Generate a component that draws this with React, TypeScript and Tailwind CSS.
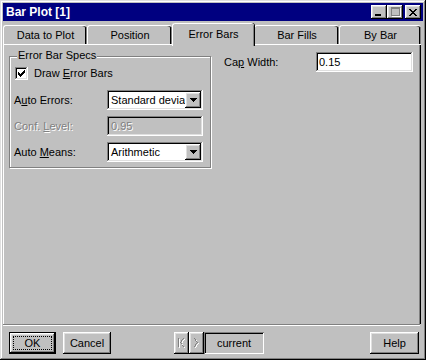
import React from "react";

const raised =
  "shadow-[inset_-1px_-1px_#000,inset_1px_1px_#fff,inset_-2px_-2px_#808080,inset_2px_2px_#dfdfdf]";
const sunken =
  "shadow-[inset_-1px_-1px_#fff,inset_1px_1px_#808080,inset_-2px_-2px_#dfdfdf,inset_2px_2px_#000]";

function Arrow() {
  return (
    <svg width="7" height="4" viewBox="0 0 7 4" shapeRendering="crispEdges">
      <path d="M0 0h7v1h-1v1h-1v1h-1v1h-1v-1h-1v-1h-1v-1h-1z" fill="#000" />
    </svg>
  );
}

function Combo({ text }: { text: string }) {
  return (
    <div className={`w-[96px] h-[20px] bg-white ${sunken} flex items-center p-[2px]`}>
      <span className="flex-1 pl-[2px] text-black leading-[16px] whitespace-nowrap">{text}</span>
      <div className={`w-[16px] h-[16px] bg-[#c0c0c0] ${raised} flex items-center justify-center`}>
        <Arrow />
      </div>
    </div>
  );
}

function Tab({ label, w, active }: { label: string; w: string; active?: boolean }) {
  if (active) {
    return (
      <div
        className={`${w} h-[23px] relative z-10 bg-[#c0c0c0] rounded-t-[3px] border-l border-t border-white shadow-[inset_-1px_0_#808080,1px_0_#000] flex items-center justify-center pb-[2px]`}
      >
        {label}
      </div>
    );
  }
  return (
    <div className={`${w} h-[19px] mt-[2px] flex items-center justify-center rounded-t-[3px] border-l border-t border-white shadow-[inset_-1px_0_#808080,inset_-2px_0_#000] bg-[#c0c0c0]`}>
      {label}
    </div>
  );
}

function TitleBtn({ children }: { children: React.ReactNode }) {
  return (
    <div className={`w-[16px] h-[14px] bg-[#c0c0c0] ${raised} flex items-center justify-center`}>
      {children}
    </div>
  );
}

function Btn({ children, w, def }: { children: React.ReactNode; w: string; def?: boolean }) {
  if (def) {
    return (
      <div className={`${w} h-[22px] border border-black`}>
        <div className={`w-full h-full bg-[#c0c0c0] ${raised} flex items-center justify-center p-[3px]`}>
          <div className="w-full h-full border border-dotted border-black flex items-center justify-center">
            {children}
          </div>
        </div>
      </div>
    );
  }
  return (
    <div className={`${w} h-[22px] bg-[#c0c0c0] ${raised} flex items-center justify-center`}>{children}</div>
  );
}

export default function App() {
  return (
    <div className="w-[426px] h-[360px] bg-[#c0c0c0] font-['Liberation_Sans',Arial,sans-serif] text-[11px] text-black shadow-[inset_-1px_-1px_#000,inset_1px_1px_#dfdfdf,inset_-2px_-2px_#808080,inset_2px_2px_#fff] p-[3px] flex flex-col select-none">
      {/* title bar */}
      <div className="h-[18px] bg-[#000080] flex items-center pl-[3px] pr-[2px]">
        <span className="text-white font-bold text-[12px] flex-1">Bar Plot [1]</span>
        <TitleBtn>
          <div className="w-[6px] h-[2px] bg-black mt-[6px] -ml-[2px]" />
        </TitleBtn>
        <TitleBtn>
          <div className="w-[9px] h-[9px] border border-[#808080] border-t-2 shadow-[1px_1px_#fff] -mt-[1px]" />
        </TitleBtn>
        <div className="w-[2px]" />
        <TitleBtn>
          <svg width="8" height="7" viewBox="0 0 8 7" shapeRendering="crispEdges">
            <path
              d="M0 0h2v1h1v1h2v-1h1v-1h2v1h-1v1h-1v1h-1v1h1v1h1v1h1v1h-2v-1h-1v-1h-2v1h-1v1h-2v-1h1v-1h1v-1h1v-1h-1v-1h-1v-1h-1z"
              fill="#000"
            />
          </svg>
        </TitleBtn>
      </div>

      {/* tabs */}
      <div className="flex mt-[2px] h-[21px] mr-[2px]">
        <Tab label="Data to Plot" w="w-[84px]" />
        <Tab label="Position" w="w-[85px]" />
        <Tab label="Error Bars" w="w-[82px]" active />
        <Tab label="Bar Fills" w="w-[85px]" />
        <Tab label="By Bar" w="w-[82px]" />
      </div>

      {/* panel */}
      <div className="flex-1 mr-[2px] shadow-[inset_1px_1px_#fff,inset_-1px_0_#000,inset_-2px_0_#808080] flex items-start pl-[6px] pt-[8px]">
        {/* group box */}
        <div className="relative mt-[4px] w-[202px] h-[112px] border border-[#808080] shadow-[inset_1px_1px_#fff,1px_1px_#fff] flex flex-col pl-[4px] pt-[10px]">
          <span className="absolute left-[7px] top-[-8px] px-[1px] bg-[#c0c0c0] leading-[13px]">Error Bar Specs</span>
          <div className="flex items-center h-[13px] pl-[1px]">
            <div className={`w-[13px] h-[13px] bg-white ${sunken} flex items-center justify-center`}>
              <svg width="7" height="7" viewBox="0 0 7 7" shapeRendering="crispEdges">
                <path d="M6 0h1v3h-1v1h-1v1h-1v1h-1v1h-1v-1h-1v-1h-1v-1h-1v-3h1v1h1v1h1v1h1v-1h1v-1h1z" fill="#000" />
              </svg>
            </div>
            <span className="ml-[6px]">
              Draw <u>E</u>rror Bars
            </span>
          </div>
          <div className="flex flex-col gap-[6px] mt-[10px]">
            <div className="flex items-center h-[20px]">
              <span className="w-[93px]">
                A<u>u</u>to Errors:
              </span>
              <Combo text="Standard devia" />
            </div>
            <div className="flex items-center h-[20px]">
              <span className="w-[93px] text-[#808080] [text-shadow:1px_1px_#fff]">
                Conf. <u>L</u>evel:
              </span>
              <div className={`w-[96px] h-[20px] bg-[#c0c0c0] ${sunken} flex items-center pl-[4px] text-[#808080] [text-shadow:1px_1px_#fff]`}>
                0.95
              </div>
            </div>
            <div className="flex items-center h-[20px]">
              <span className="w-[93px]">
                Auto <u>M</u>eans:
              </span>
              <Combo text="Arithmetic" />
            </div>
          </div>
        </div>

        {/* cap width */}
        <div className="flex items-center h-[20px] ml-[13px]">
          <span className="w-[92px]">
            Ca<u>p</u> Width:
          </span>
          <div className={`w-[97px] h-[20px] bg-white ${sunken} flex items-center pl-[3px]`}>0.15</div>
        </div>
      </div>

      {/* etched separator */}
      <div className="h-[2px] mr-[3px] border-t border-[#808080] border-b border-b-white" />

      {/* bottom bar */}
      <div className="h-[31px] flex items-start pt-[6px] pl-[6px]">
        <Btn w="w-[47px]" def>
          OK
        </Btn>
        <div className="ml-[7px]">
          <Btn w="w-[48px]">Cancel</Btn>
        </div>
        <div className="ml-[63px] flex">
          <div className={`w-[15px] h-[22px] bg-[#c0c0c0] ${raised} flex items-center justify-center`}>
            <svg width="8" height="10" viewBox="0 0 8 10" shapeRendering="crispEdges">
              <g fill="#fff" transform="translate(1,1)">
                <path d="M0 0h1v9h-1z" />
                <path d="M5 0h1v1h-1v1h-1v2h-1v1h1v2h1v1h1v1h-1v-1h-1v-2h-1v-1h-1v-1h1v-2h1v-1h1z" />
              </g>
              <g fill="#808080">
                <path d="M0 0h1v9h-1z" />
                <path d="M5 0h1v1h-1v1h-1v2h-1v1h1v2h1v1h1v1h-1v-1h-1v-2h-1v-1h-1v-1h1v-2h1v-1h1z" />
              </g>
            </svg>
          </div>
          <div className={`w-[15px] h-[22px] bg-[#c0c0c0] ${raised} flex items-center justify-center`}>
            <svg width="6" height="10" viewBox="0 0 6 10" shapeRendering="crispEdges">
              <path
                transform="translate(1,1)"
                d="M0 0h1v1h1v2h1v1h1v1h-1v1h-1v2h-1v1h-1v-1h1v-2h1v-1h1v-1h-1v-1h-1v-2h-1z"
                fill="#fff"
              />
              <path d="M0 0h1v1h1v2h1v1h1v1h-1v1h-1v2h-1v1h-1v-1h1v-2h1v-1h1v-1h-1v-1h-1v-2h-1z" fill="#808080" />
            </svg>
          </div>
          <div className="w-[60px] h-[22px] bg-[#c0c0c0] shadow-[inset_1px_1px_#808080,inset_-1px_-1px_#fff,inset_2px_2px_#000] flex items-center justify-center">
            current
          </div>
        </div>
        <div className="ml-[106px]">
          <Btn w="w-[49px]">Help</Btn>
        </div>
      </div>
    </div>
  );
}
